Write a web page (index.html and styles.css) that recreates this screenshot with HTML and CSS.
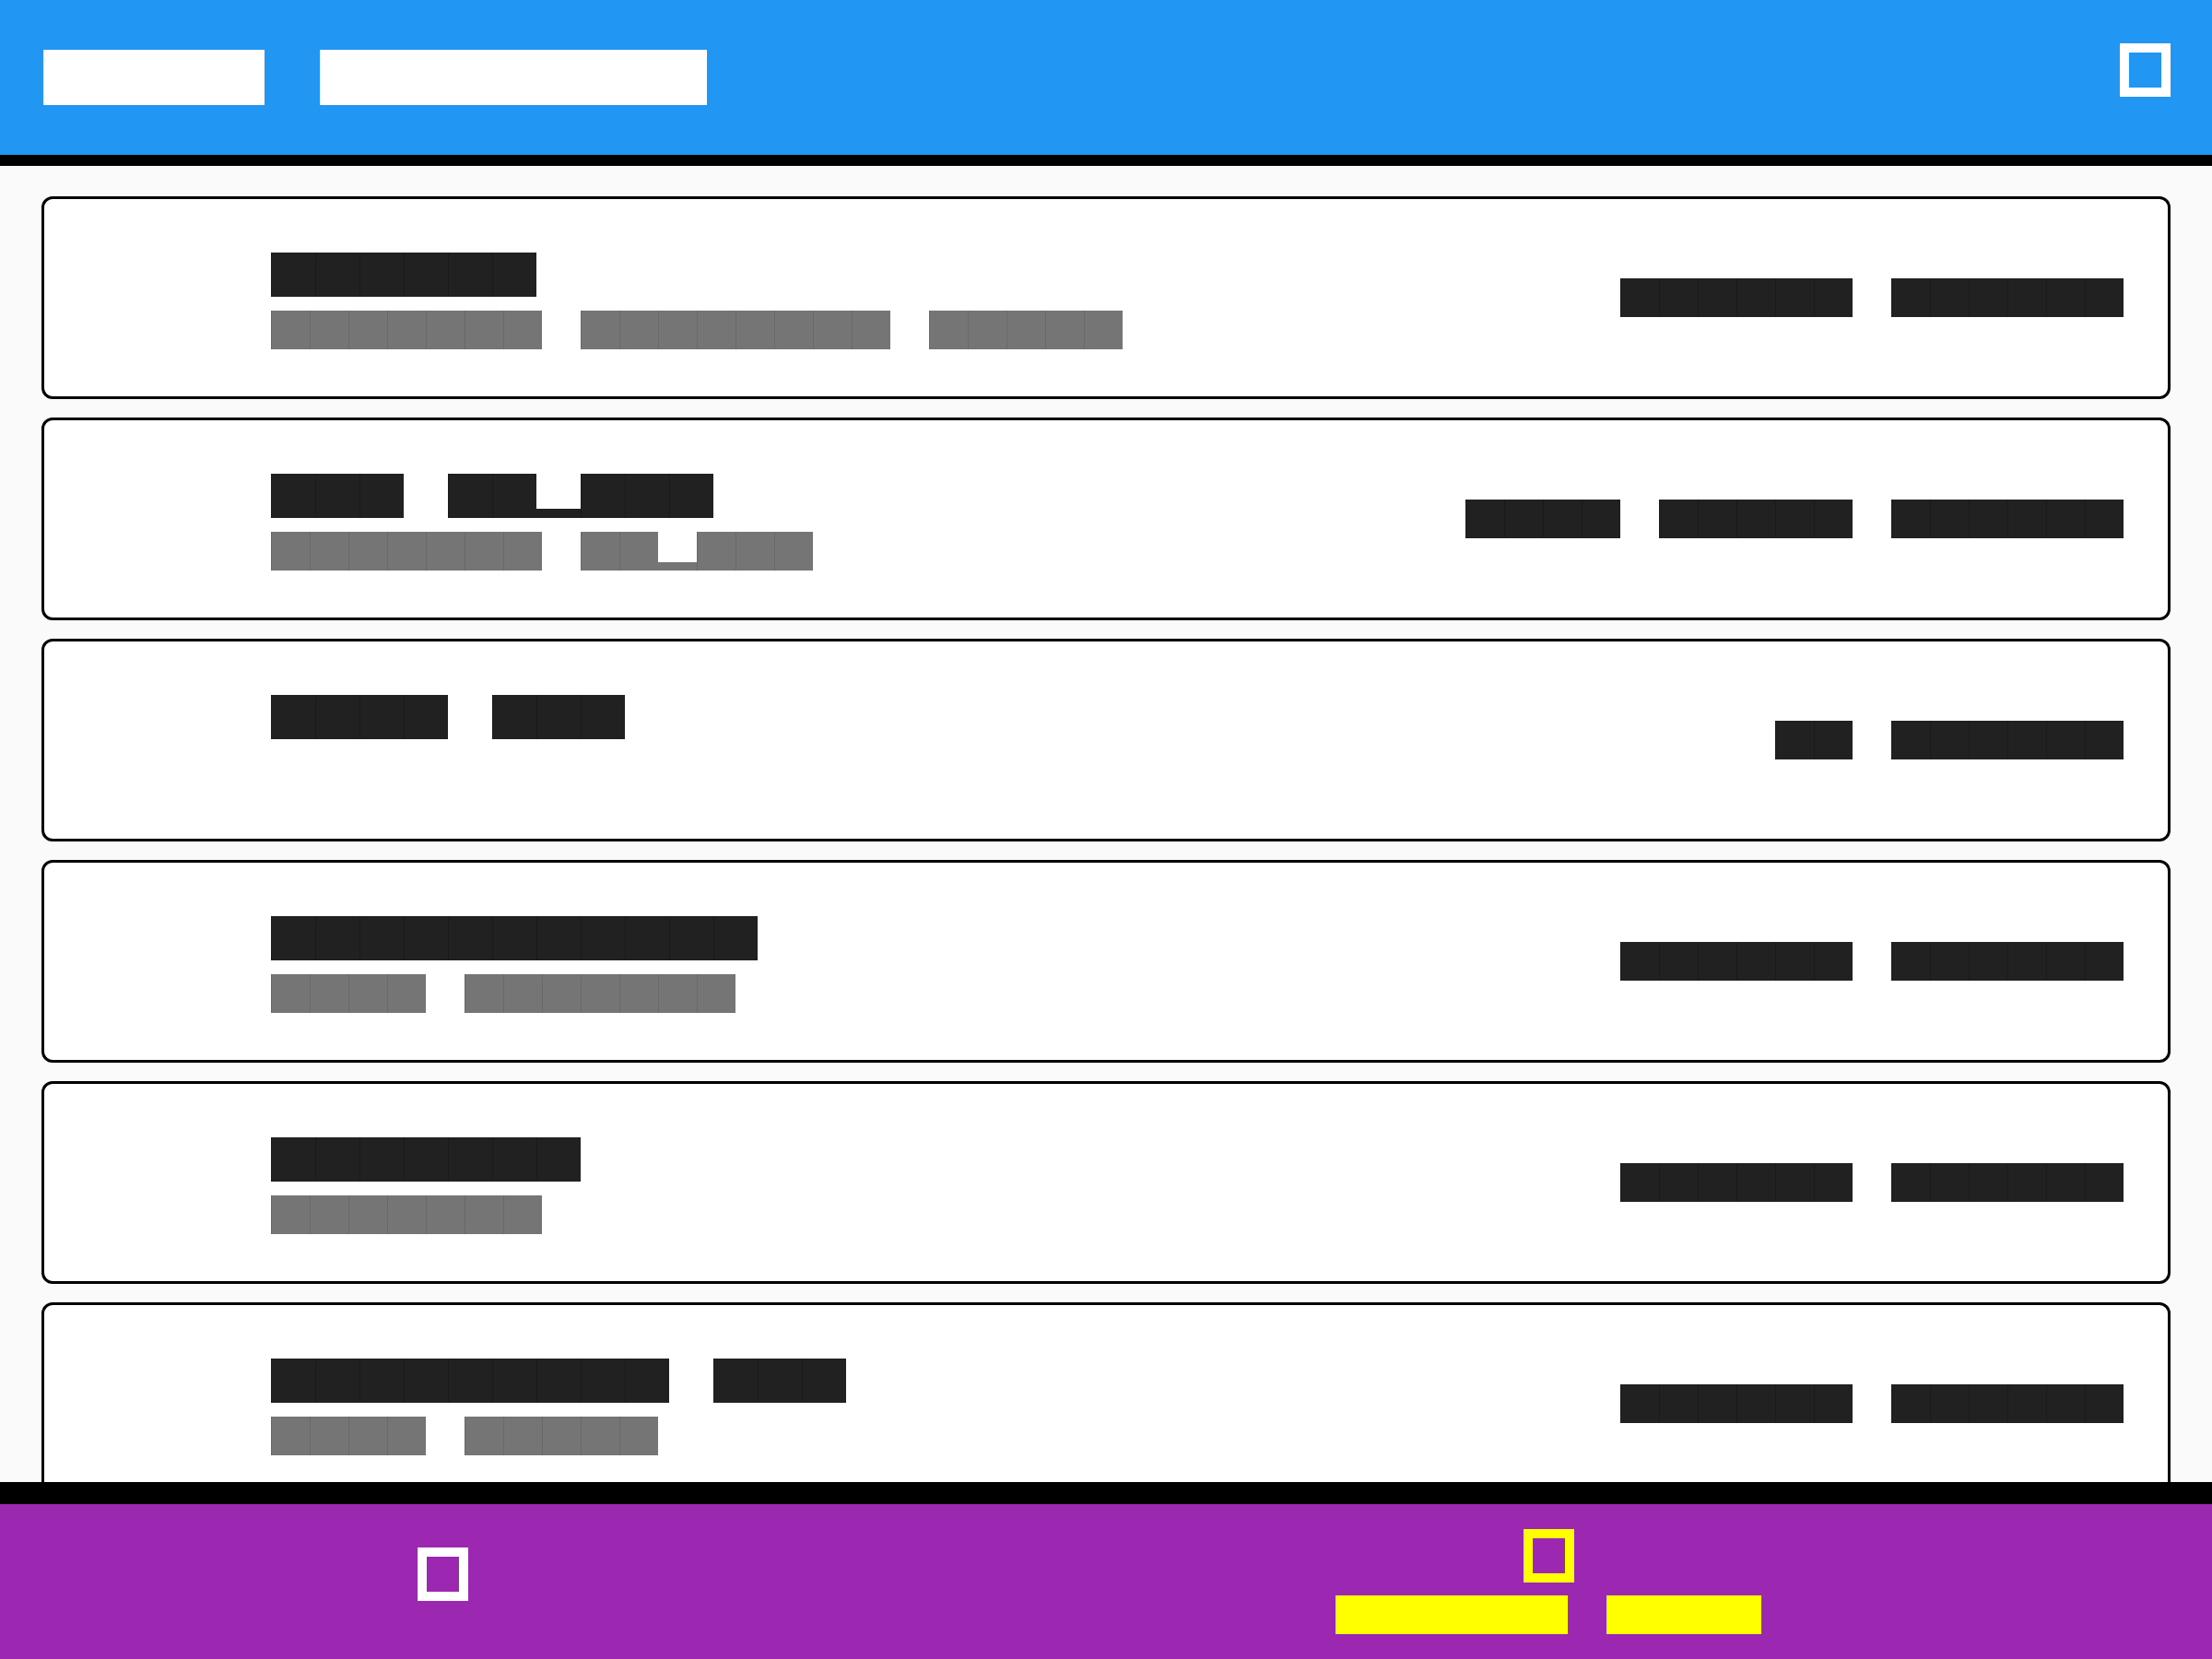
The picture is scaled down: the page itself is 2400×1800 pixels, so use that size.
FILE: index.html
```html
<!DOCTYPE html>
<html lang="en">
<head>
    <meta charset="UTF-8">
    <meta name="viewport" content="width=device-width, initial-scale=1.0">
    <title>Rooms</title>
    <link rel="stylesheet" href="styles.css">
</head>
<body>
    <header class="topbar">
        <div class="line brand">
            <span class="b n4"></span>
            <span class="b n7"></span>
        </div>
        <span class="ico top-ico"></span>
    </header>

    <main class="list">
        <div class="card">
            <div class="info">
                <div class="line title"><span class="b n6"></span></div>
                <div class="line sub"><span class="b n7"></span><span class="b n8"></span><span class="b n5"></span></div>
            </div>
            <div class="line meta"><span class="b n6"></span><span class="b n6"></span></div>
        </div>

        <div class="card">
            <div class="info">
                <div class="line title">
                    <span class="b n3"></span>
                    <span class="word"><span class="b n2"></span><span class="b n1 low"></span><span class="b n3"></span></span>
                </div>
                <div class="line sub">
                    <span class="b n7"></span>
                    <span class="word"><span class="b n2"></span><span class="b n1 low"></span><span class="b n3"></span></span>
                </div>
            </div>
            <div class="line meta"><span class="b n4"></span><span class="b n5"></span><span class="b n6"></span></div>
        </div>

        <div class="card">
            <div class="info">
                <div class="line title"><span class="b n4"></span><span class="b n3"></span></div>
            </div>
            <div class="line meta"><span class="b n2"></span><span class="b n6"></span></div>
        </div>

        <div class="card">
            <div class="info">
                <div class="line title"><span class="b n11"></span></div>
                <div class="line sub"><span class="b n4"></span><span class="b n7"></span></div>
            </div>
            <div class="line meta"><span class="b n6"></span><span class="b n6"></span></div>
        </div>

        <div class="card">
            <div class="info">
                <div class="line title"><span class="b n7"></span></div>
                <div class="line sub"><span class="b n7"></span></div>
            </div>
            <div class="line meta"><span class="b n6"></span><span class="b n6"></span></div>
        </div>

        <div class="card">
            <div class="info">
                <div class="line title"><span class="b n9"></span><span class="b n3"></span></div>
                <div class="line sub"><span class="b n4"></span><span class="b n5"></span></div>
            </div>
            <div class="line meta"><span class="b n6"></span><span class="b n6"></span></div>
        </div>
    </main>

    <nav class="bottombar">
        <div class="tab">
            <span class="ico tab-ico"></span>
        </div>
        <div class="tab active">
            <span class="ico"></span>
            <div class="line label"><span class="b n6"></span><span class="b n4"></span></div>
        </div>
    </nav>
</body>
</html>
```

FILE: styles.css
```css
html, body {
    margin: 0;
    padding: 0;
}

body {
    height: 1800px;
    display: flex;
    flex-direction: column;
    font-family: "Liberation Sans", Arial, sans-serif;
    background-color: #fafafa;
    overflow: hidden;
}

/* text blocks: one cell per character */
.line {
    display: flex;
    gap: var(--c);
}

.word {
    display: flex;
}

.b {
    display: block;
    height: var(--c);
    width: calc(var(--n) * var(--c));
    background: repeating-linear-gradient(to right, var(--sep) 0 1px, var(--ink) 1px var(--c));
}

.b.low {
    background: linear-gradient(to top, var(--ink) 21%, transparent 21%);
}

.n1 { --n: 1; }
.n2 { --n: 2; }
.n3 { --n: 3; }
.n4 { --n: 4; }
.n5 { --n: 5; }
.n6 { --n: 6; }
.n7 { --n: 7; }
.n8 { --n: 8; }
.n9 { --n: 9; }
.n11 { --n: 11; }

.ico {
    display: block;
    box-sizing: border-box;
    width: 55px;
    height: 58px;
    border: 10px solid currentColor;
}

/* header */
.topbar {
    flex: none;
    height: 168px;
    display: flex;
    align-items: center;
    justify-content: space-between;
    padding: 0 45px 0 47px;
    background-color: #2196f3;
    border-bottom: 12px solid #000;
    color: #fff;
}

.brand {
    --c: 60px;
    --ink: #fff;
    --sep: #fff;
}

.top-ico {
    margin-bottom: 16px;
}

/* list */
.list {
    flex: 1;
    min-height: 0;
    overflow: hidden;
    display: flex;
    flex-direction: column;
    gap: 20px;
    padding: 33px 45px 0;
}

.card {
    flex: none;
    box-sizing: border-box;
    height: 220px;
    display: flex;
    justify-content: space-between;
    padding: 0 48px 0 246px;
    background-color: #fff;
    border: 3px solid #000;
    border-radius: 12px;
}

.info {
    display: flex;
    flex-direction: column;
    gap: 15px;
    padding-top: 58px;
}

.title {
    --c: 48px;
    --ink: #212121;
    --sep: #1a1a1a;
}

.sub {
    --c: 42px;
    --ink: #757575;
    --sep: #696969;
}

.meta {
    --c: 42px;
    --ink: #212121;
    --sep: #1a1a1a;
    align-self: center;
}

/* bottom navigation */
.bottombar {
    flex: none;
    height: 168px;
    display: grid;
    grid-template-columns: 2fr 3fr;
    background-color: #9c27b0;
    border-top: 24px solid #000;
}

.tab {
    display: flex;
    flex-direction: column;
    align-items: center;
    justify-content: center;
    gap: 14px;
    color: #fff;
}

.tab-ico {
    margin-bottom: 17px;
}

.tab.active {
    color: #ffff00;
}

.label {
    --c: 42px;
    --ink: #ffff00;
    --sep: #ffff00;
}
```
